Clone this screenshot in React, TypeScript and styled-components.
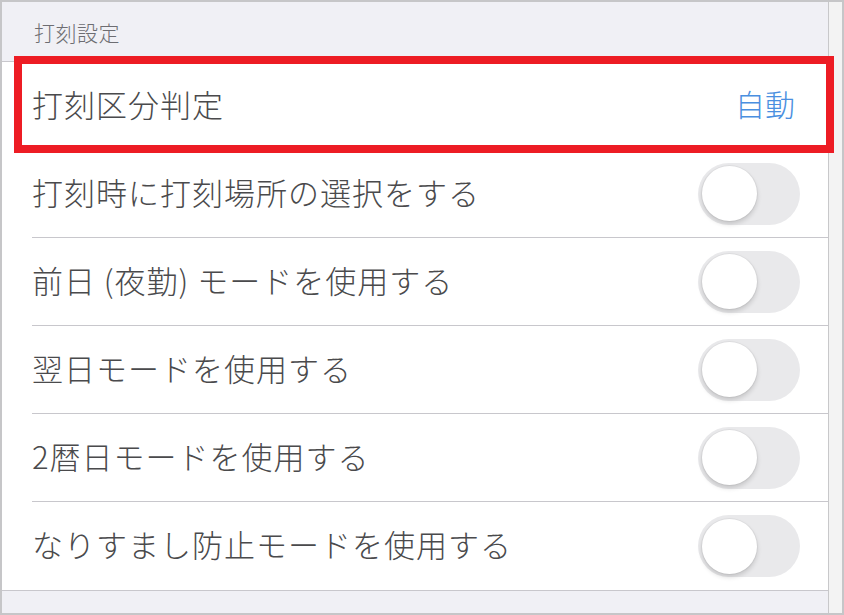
import React from "react";
import styled, { createGlobalStyle } from "styled-components";

const Global = createGlobalStyle`
  html, body { margin: 0; padding: 0; background: #ffffff; }
  body { font-family: "Noto Sans CJK JP", "Noto Sans", sans-serif; }
  * { box-sizing: border-box; }
`;

const Frame = styled.div`
  width: 844px;
  height: 615px;
  border: 2px solid #c6c6c8;
  display: flex;
  background: #f0f0f5;
`;

const Main = styled.div`
  flex: 1;
  display: flex;
  flex-direction: column;
  background: #f0f0f5;
`;

const ScrollStrip = styled.div`
  width: 14px;
  border-left: 1px solid #c8c8ca;
  background: #f3f3f3;
`;

const SectionHeader = styled.div`
  height: 60px;
  padding: 0 0 0 32px;
  display: flex;
  align-items: center;
  border-bottom: 1px solid #c8c7cc;
  font-size: 21px;
  font-weight: 300;
  color: #6d6d72;
  letter-spacing: 0.5px;
`;

const List = styled.div`
  background: #ffffff;
  border-bottom: 1px solid #c8c7cc;
`;

const Row = styled.div`
  position: relative;
  height: 88px;
  padding-left: 30px;
  display: flex;
`;

const RowInner = styled.div<{ $last?: boolean }>`
  flex: 1;
  display: flex;
  align-items: center;
  justify-content: space-between;
  padding-right: 28px;
  padding-bottom: 5px;
  border-bottom: ${(p) => (p.$last ? "none" : "1px solid #c8c7cc")};
`;

const Label = styled.span`
  font-size: 31px;
  font-weight: 300;
  color: #4a4a4c;
  letter-spacing: 1px;
  white-space: nowrap;
`;

const Value = styled.span`
  font-size: 30px;
  font-weight: 300;
  color: #4a8fe0;
  margin-right: 5px;
`;

const Highlight = styled.div`
  position: absolute;
  left: 12px;
  top: -6px;
  width: 820px;
  height: 97px;
  border: 8px solid #ed1c24;
  pointer-events: none;
`;

const Track = styled.div`
  width: 102px;
  height: 62px;
  margin-top: 5px;
  border-radius: 31px;
  background: #e9e9eb;
  padding: 4px;
  display: flex;
  align-items: center;
`;

const Knob = styled.div`
  width: 55px;
  height: 55px;
  border-radius: 50%;
  background: #ffffff;
  box-shadow: 0 3px 5px rgba(0, 0, 0, 0.16), 0 0 0 1px rgba(0, 0, 0, 0.04);
`;

const Footer = styled.div`
  flex: 1;
  background: #f0f0f5;
`;

const Toggle = () => (
  <Track>
    <Knob />
  </Track>
);

const toggles = [
  "打刻時に打刻場所の選択をする",
  "前日 (夜勤) モードを使用する",
  "翌日モードを使用する",
  "2暦日モードを使用する",
  "なりすまし防止モードを使用する",
];

export default function App() {
  return (
    <>
      <Global />
      <Frame>
        <Main>
          <SectionHeader>打刻設定</SectionHeader>
          <List>
            <Row>
              <RowInner>
                <Label>打刻区分判定</Label>
                <Value>自動</Value>
              </RowInner>
              <Highlight />
            </Row>
            {toggles.map((t, i) => (
              <Row key={t}>
                <RowInner $last={i === toggles.length - 1}>
                  <Label>{t}</Label>
                  <Toggle />
                </RowInner>
              </Row>
            ))}
          </List>
          <Footer />
        </Main>
        <ScrollStrip />
      </Frame>
    </>
  );
}
